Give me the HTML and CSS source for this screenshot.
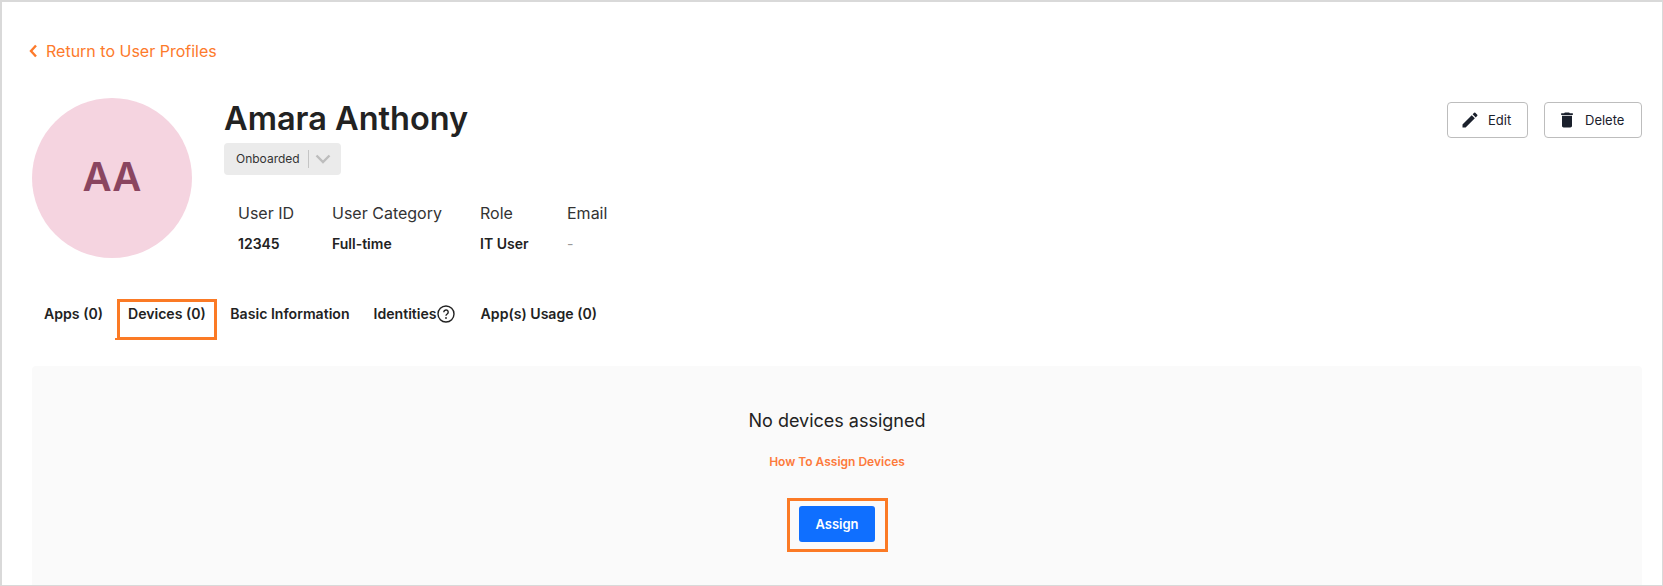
FILE: index.html
```html
<!DOCTYPE html>
<html lang="en">
<head>
  <meta charset="UTF-8">
  <title>User Profile</title>
  <link rel="stylesheet" href="styles.css">
</head>
<body>
  <div class="page">
    <!-- Back link -->
    <a class="back-link" href="#">
      <svg class="back-icon" width="9" height="14" viewBox="0 0 9 14"><path d="M7 1.500 2 7 7 12.500" fill="none" stroke="#fd7a2b" stroke-width="2.400"/></svg>
      Return to User Profiles
    </a>

    <!-- Profile header -->
    <div class="profile">
      <div class="avatar">AA</div>
      <div class="profile-main">
        <h1>Amara Anthony</h1>
        <div class="status">
          <span class="status-label">Onboarded</span>
          <span class="status-sep"></span>
          <svg width="16" height="12" viewBox="0 0 16 12"><path d="M1.500 2.500 8 9 14.500 2.500" fill="none" stroke="#bdbdbd" stroke-width="2.400"/></svg>
        </div>
        <div class="facts">
          <div class="fact fact-id"><span>User ID</span><b>12345</b></div>
          <div class="fact fact-cat"><span>User Category</span><b>Full-time</b></div>
          <div class="fact fact-role"><span>Role</span><b>IT User</b></div>
          <div class="fact"><span>Email</span><b class="empty">-</b></div>
        </div>
      </div>
      <div class="actions">
        <button class="btn btn-edit">
          <svg width="20" height="20" viewBox="0 0 24 24"><path fill="#1a202c" d="M3 17.250V21h3.750L17.810 9.940l-3.750-3.750L3 17.250zM20.710 7.040a1 1 0 0 0 0-1.410l-2.340-2.340a1 1 0 0 0-1.410 0l-1.830 1.830 3.750 3.750 1.830-1.830z"/></svg>
          Edit
        </button>
        <button class="btn btn-delete">
          <svg width="20" height="20" viewBox="0 0 24 24"><path fill="#1a202c" d="M6 19c0 1.100.9 2 2 2h8c1.100 0 2-.9 2-2V7H6v12zM19 4h-3.500l-1-1h-5l-1 1H5v2h14V4z"/></svg>
          Delete
        </button>
      </div>
    </div>

    <!-- Tabs -->
    <div class="tabs">
      <span class="tab tab-apps">Apps (0)</span>
      <span class="tab tab-devices">Devices (0)<i class="mark mark-tab"></i></span>
      <span class="tab tab-basic">Basic Information</span>
      <span class="tab tab-ident">Identities
        <svg width="18" height="18" viewBox="0 0 18 18"><circle cx="9" cy="9" r="8" fill="none" stroke="#222" stroke-width="1.400"/><path d="M6.800 7.200a2.200 2.200 0 1 1 3.400 1.800c-.8.500-1.200.9-1.200 1.800" fill="none" stroke="#222" stroke-width="1.400"/><circle cx="9" cy="13" r=".9" fill="#222"/></svg>
      </span>
      <span class="tab">App(s) Usage (0)</span>
    </div>

    <!-- Empty state -->
    <div class="panel">
      <p class="panel-title">No devices assigned</p>
      <a class="panel-link" href="#">How To Assign Devices</a>
      <button class="assign">Assign<i class="mark mark-assign"></i></button>
    </div>
  </div>
</body>
</html>
```

FILE: styles.css
```css
* {
  box-sizing: border-box;
  margin: 0;
  padding: 0;
}

html, body {
  height: 100%;
}

body {
  font-family: Inter, Arial, sans-serif;
  color: #222;
  background: #fff;
  overflow: hidden;
}

.page {
  height: 586px;
  border: 1px solid #d9d9d9;
  border-top-width: 2px;
  border-left-width: 2px;
  padding: 0 20px 0 30px;
  overflow: hidden;
}

.back-link {
  display: flex;
  align-items: center;
  gap: 8px;
  margin-top: 39px;
  height: 20px;
  font-size: 16px;
  color: #fd7a2b;
  text-decoration: none;
  margin-left: -3px;
}

.profile {
  display: flex;
  margin-top: 37px;
  height: 160px;
}

.avatar {
  width: 160px;
  height: 160px;
  padding-bottom: 3px;
  border-radius: 50%;
  background: #f5d4e0;
  color: #8a4560;
  font-size: 40px;
  font-weight: 600;
  display: flex;
  justify-content: center;
  align-items: center;
  flex-shrink: 0;
}

.profile-main {
  margin-left: 32px;
  flex: 1;
}

h1 {
  font-size: 32.500px;
  font-weight: 600;
  line-height: 38px;
  margin-top: 2px;
  color: #222;
}

.status {
  display: flex;
  align-items: center;
  width: 117px;
  height: 32px;
  margin-top: 5px;
  padding-left: 12px;
  padding-bottom: 1px;
  background: #ebebeb;
  border-radius: 4px;
}

.status-label {
  font-size: 12px;
  color: #333;
}

.status-sep {
  width: 1px;
  height: 18px;
  background: #c4c4c4;
  margin: 0 6px 0 8px;
}

.facts {
  display: flex;
  margin-top: 27px;
  padding-left: 14px;
}

.fact {
  display: flex;
  flex-direction: column;
  font-size: 16px;
  line-height: 22px;
  color: #333;
}

.fact b {
  font-size: 14px;
  font-weight: 600;
  margin-top: 9px;
  color: #222;
}

.fact b.empty {
  font-weight: 400;
  color: #999;
}

.fact-id { width: 94px; }
.fact-cat { width: 148px; }
.fact-role { width: 87px; }

.actions {
  display: flex;
  gap: 16px;
  margin-top: 4px;
  align-items: flex-start;
}

.btn {
  display: flex;
  align-items: center;
  height: 36px;
  padding-left: 12px;
  padding-bottom: 1px;
  background: #fff;
  border: 1px solid #bdbdbd;
  border-radius: 4px;
  font-family: inherit;
  font-size: 13px;
  color: #1a202c;
}

.btn-edit {
  width: 81px;
  gap: 8px;
}

.btn-delete {
  width: 98px;
  gap: 8px;
}

.tabs {
  display: flex;
  margin-top: 35px;
  height: 41px;
  align-items: center;
  font-size: 14.100px;
  font-weight: 600;
  color: #222;
}

.tab {
  position: relative;
  display: flex;
  align-items: center;
  white-space: nowrap;
}

.tab-apps { margin-left: 12px; margin-right: 25px; }
.tab-devices { margin-right: 24.500px; }
.tab-basic { margin-right: 24px; }
.tab-ident { margin-right: 26px; }

.mark {
  position: absolute;
  border: 3px solid #fb7a25;
  pointer-events: none;
}

.mark-tab {
  left: -11px;
  top: -6px;
  width: 100px;
  height: 41px;
}

.mark-tab::after {
  content: "";
  position: absolute;
  left: -5px;
  bottom: -3px;
  width: 5px;
  height: 2px;
  background: #fb7a25;
}

.panel {
  position: relative;
  margin-top: 32px;
  height: 240px;
  background: #fafafa;
  border-radius: 4px;
  display: flex;
  flex-direction: column;
  align-items: center;
}

.panel-title {
  margin-top: 43px;
  font-size: 18px;
  line-height: 24px;
  color: #222;
}

.panel-link {
  margin-top: 21px;
  font-size: 12px;
  font-weight: 600;
  line-height: 16px;
  color: #fd7a3c;
  text-decoration: none;
}

.assign {
  position: relative;
  margin-top: 36px;
  width: 76px;
  height: 36px;
  background: #0f6fff;
  color: #fff;
  border: 0;
  border-radius: 3px;
  font-family: inherit;
  font-size: 13px;
  font-weight: 600;
}

.mark-assign {
  left: -12px;
  top: -8px;
  width: 101px;
  height: 54px;
}
```
